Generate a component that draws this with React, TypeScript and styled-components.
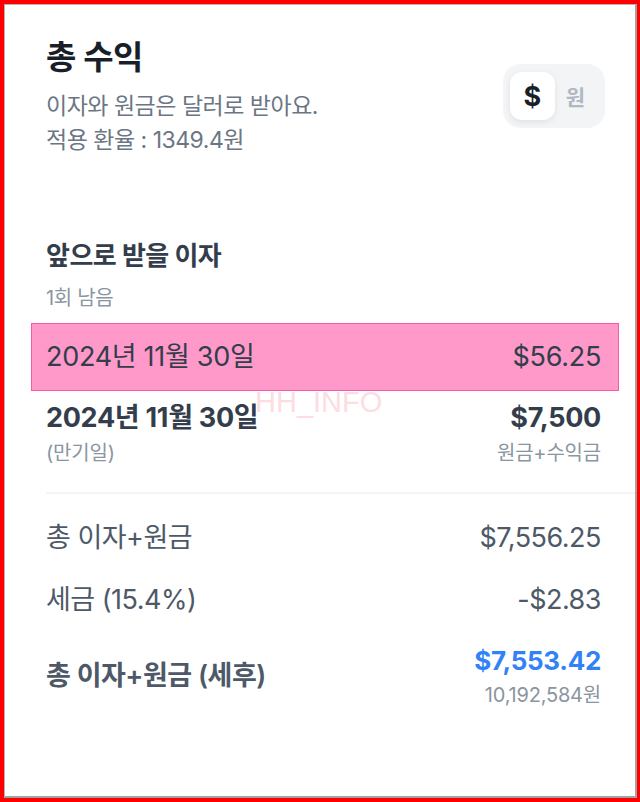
import styled, { createGlobalStyle } from "styled-components";

const GlobalStyle = createGlobalStyle`
    html, body {
        margin: 0;
        padding: 0;
        background: #ff0000;
    }
    body {
        font-family: Inter, "Noto Sans CJK KR", sans-serif;
    }
    * {
        box-sizing: border-box;
    }
`;

const StyledFrame = styled.div`
    width: 640px;
    height: 802px;
    padding: 4px 3px 4px 4px;
    background: #ff0000;
`;

const StyledCard = styled.div`
    position: relative;
    height: 100%;
    background: #ffffff;
    border-top: 1px solid #b4b4b4;
    border-left: 1px solid #b4b4b4;
    border-right: 2px solid #a2a2a2;
    border-bottom: 2px solid #a2a2a2;
    padding: 30px 34px 0 41px;
    overflow: hidden;
`;

const StyledHeader = styled.div`
    display: flex;
    justify-content: space-between;
    align-items: center;
`;

const StyledTitle = styled.h1`
    margin: 0;
    font-size: 33px;
    line-height: 44px;
    font-weight: 700;
    color: #191f28;
    letter-spacing: -0.5px;
`;

const StyledSubtitle = styled.p`
    margin: 10px 0 0;
    font-size: 23px;
    line-height: 34px;
    color: #6b7684;
    letter-spacing: -0.5px;
`;

const StyledToggle = styled.div`
    display: flex;
    align-items: center;
    gap: 11px;
    width: 102px;
    height: 64px;
    margin-right: -4px;
    padding: 8px 20px 8px 7px;
    border-radius: 18px;
    background: #f2f4f6;
`;

const StyledToggleOption = styled.div<{ $active?: boolean }>`
    display: flex;
    align-items: center;
    justify-content: center;
    width: ${(p) => (p.$active ? "45px" : "auto")};
    height: 48px;
    border-radius: 12px;
    background: ${(p) => (p.$active ? "#ffffff" : "transparent")};
    box-shadow: ${(p) => (p.$active ? "0 2px 6px rgba(0, 0, 0, 0.08)" : "none")};
    color: ${(p) => (p.$active ? "#191f28" : "#b0b8c1")};
    font-size: ${(p) => (p.$active ? "27px" : "21px")};
    font-weight: 700;
`;

const StyledSectionTitle = styled.h2`
    margin: 82px 0 0;
    font-size: 26px;
    line-height: 34px;
    font-weight: 700;
    color: #333d4b;
    letter-spacing: -0.5px;
`;

const StyledCaption = styled.p`
    margin: 12px 0 0;
    font-size: 20px;
    line-height: 26px;
    color: #8b95a1;
    letter-spacing: -0.3px;
`;

const StyledPaymentList = styled.div`
    display: flex;
    flex-direction: column;
    gap: 9px;
    margin-top: 12px;
`;

const StyledPayment = styled.div<{ $highlight?: boolean }>`
    display: flex;
    justify-content: space-between;
    align-items: ${(p) => (p.$highlight ? "center" : "flex-start")};
    height: ${(p) => (p.$highlight ? "68px" : "auto")};
    margin: ${(p) => (p.$highlight ? "0 -18px 0 -15px" : "0")};
    padding: ${(p) => (p.$highlight ? "0 17px 0 14px" : "0")};
    background: ${(p) => (p.$highlight ? "#fe99c9" : "transparent")};
    border: ${(p) => (p.$highlight ? "1px solid #f45ca6" : "none")};
    color: #333d4b;
`;

const StyledColumn = styled.div<{ $right?: boolean }>`
    display: flex;
    flex-direction: column;
    align-items: ${(p) => (p.$right ? "flex-end" : "flex-start")};
    gap: 4px;
`;

const StyledValue = styled.span<{ $bold?: boolean }>`
    font-size: 27px;
    line-height: 36px;
    font-weight: ${(p) => (p.$bold ? 700 : 400)};
    letter-spacing: -0.3px;
`;

const StyledNote = styled.span`
    font-size: 20px;
    line-height: 26px;
    color: #8b95a1;
    letter-spacing: -0.2px;
`;

const StyledDivider = styled.hr`
    margin: 26px -34px 0 0;
    border: none;
    height: 2px;
    background: #f2f4f6;
`;

const StyledSummary = styled.div`
    display: flex;
    flex-direction: column;
    gap: 26px;
    margin-top: 26px;
`;

const StyledSummaryRow = styled.div`
    display: flex;
    justify-content: space-between;
    align-items: center;
    color: #4e5968;
`;

const StyledLabel = styled.span<{ $bold?: boolean }>`
    font-size: 27px;
    line-height: 36px;
    font-weight: ${(p) => (p.$bold ? 600 : 400)};
    letter-spacing: -0.5px;
`;

const StyledTotal = styled.span`
    font-size: 26px;
    line-height: 34px;
    font-weight: 700;
    color: #3182f6;
    letter-spacing: -0.3px;
`;

const StyledWatermark = styled.div`
    position: absolute;
    left: 250px;
    top: 381px;
    font-family: "Liberation Sans", sans-serif;
    font-size: 29px;
    color: #fddde2;
    pointer-events: none;
`;

const payments = [
    { date: "2024년 11월 30일", amount: "$56.25", highlight: true },
    { date: "2024년 11월 30일", amount: "$7,500", note: "(만기일)", amountNote: "원금+수익금" },
];

export default function App() {
    return (
        <>
            <GlobalStyle />
            <StyledFrame>
                <StyledCard>
                    <StyledHeader>
                        <div>
                            <StyledTitle>총 수익</StyledTitle>
                            <StyledSubtitle>
                                이자와 원금은 달러로 받아요.
                                <br />
                                적용 환율 : 1349.4원
                            </StyledSubtitle>
                        </div>
                        <StyledToggle>
                            <StyledToggleOption $active>$</StyledToggleOption>
                            <StyledToggleOption>원</StyledToggleOption>
                        </StyledToggle>
                    </StyledHeader>

                    <StyledSectionTitle>앞으로 받을 이자</StyledSectionTitle>
                    <StyledCaption>1회 남음</StyledCaption>

                    <StyledPaymentList>
                        {payments.map((item, i) => (
                            <StyledPayment key={i} $highlight={item.highlight}>
                                <StyledColumn>
                                    <StyledValue $bold={!item.highlight}>{item.date}</StyledValue>
                                    {item.note && <StyledNote>{item.note}</StyledNote>}
                                </StyledColumn>
                                <StyledColumn $right>
                                    <StyledValue $bold={!item.highlight}>{item.amount}</StyledValue>
                                    {item.amountNote && <StyledNote>{item.amountNote}</StyledNote>}
                                </StyledColumn>
                            </StyledPayment>
                        ))}
                    </StyledPaymentList>

                    <StyledDivider />

                    <StyledSummary>
                        <StyledSummaryRow>
                            <StyledLabel>총 이자+원금</StyledLabel>
                            <StyledLabel>$7,556.25</StyledLabel>
                        </StyledSummaryRow>
                        <StyledSummaryRow>
                            <StyledLabel>세금 (15.4%)</StyledLabel>
                            <StyledLabel>-$2.83</StyledLabel>
                        </StyledSummaryRow>
                        <StyledSummaryRow>
                            <StyledLabel $bold>총 이자+원금 (세후)</StyledLabel>
                            <StyledColumn $right>
                                <StyledTotal>$7,553.42</StyledTotal>
                                <StyledNote>10,192,584원</StyledNote>
                            </StyledColumn>
                        </StyledSummaryRow>
                    </StyledSummary>

                    <StyledWatermark>HH_INFO</StyledWatermark>
                </StyledCard>
            </StyledFrame>
        </>
    );
}
